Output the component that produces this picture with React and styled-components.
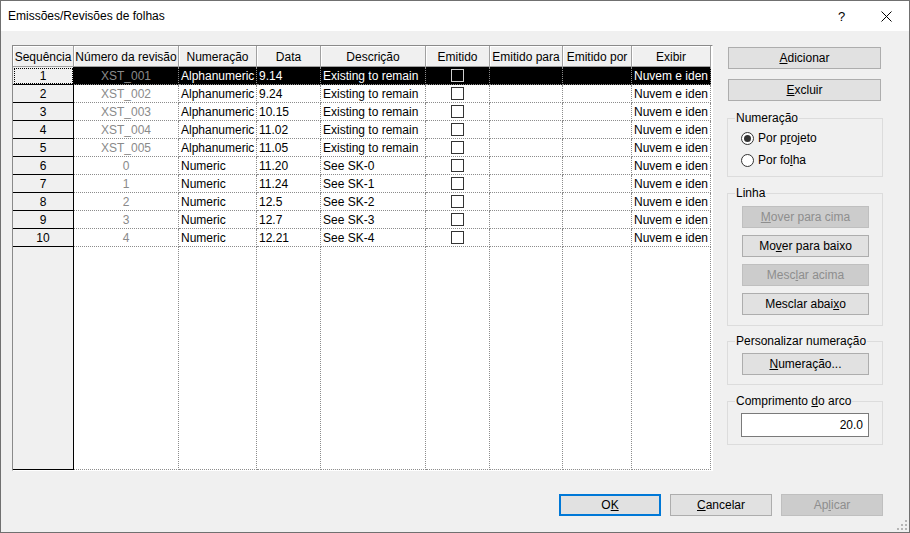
import React from 'react';
import styled, { createGlobalStyle, css } from 'styled-components';

const Global = createGlobalStyle`
  html, body { margin: 0; padding: 0; background: #fff; }
  body { font-family: "Liberation Sans", Arial, sans-serif; font-size: 12px; color: #000; }
  * { box-sizing: border-box; }
`;

const Window = styled.div`
  position: relative;
  width: 910px;
  height: 533px;
  border: 1px solid #707070;
  display: flex;
  flex-direction: column;
  background: #f0f0f0;
  overflow: hidden;
`;

const TitleBar = styled.div`
  height: 30px;
  background: #fff;
  display: flex;
  align-items: center;
  padding-left: 7px;
  flex-shrink: 0;
`;

const Title = styled.div`
  flex: 1;
  font-size: 12px;
`;

const TitleButton = styled.div`
  width: 45px;
  height: 30px;
  display: flex;
  align-items: center;
  justify-content: center;
  font-size: 13px;
`;

const Body = styled.div`
  flex: 1;
  display: flex;
  flex-direction: column;
  padding: 14px 0 0 11px;
`;

const Main = styled.div`
  display: flex;
  gap: 14px;
`;

const TableFrame = styled.div`
  width: 701px;
  height: 426px;
  border: 1px solid;
  border-color: #8a8a8a #fff #fff #8a8a8a;
  background: #fff;
`;

const Grid = styled.div`
  display: grid;
  grid-template-columns: 61px 105px 78px 64px 105px 64px 73px 69px 79px;
  grid-template-rows: 21px repeat(10, 18px) 1fr;
  height: 100%;
`;

const HeaderCell = styled.div`
  background: #f0f0f0;
  border-right: 1px solid #a0a0a0;
  border-bottom: 1px solid #a0a0a0;
  box-shadow: inset 1px 1px 0 #fff;
  display: flex;
  align-items: center;
  justify-content: center;
  white-space: nowrap;
  overflow: hidden;
  padding-top: 1px;
`;

const SeqCell = styled.div`
  background: #f0f0f0;
  border-right: 1px solid #000;
  border-bottom: 1px solid #000;
  display: flex;
  align-items: center;
  justify-content: center;
  ${(p) => p.$focus && css`
    outline: 1px dotted #000;
    outline-offset: -2px;
  `}
`;

const DataCell = styled.div`
  background: ${(p) => (p.$selected ? '#000' : '#fff')};
  color: ${(p) => (p.$selected ? '#fff' : '#000')};
  border-right: 1px dotted #8c8c8c;
  border-bottom: 1px dotted #8c8c8c;
  padding: 0 2px;
  display: flex;
  align-items: center;
  justify-content: ${(p) => (p.$center ? 'center' : 'flex-start')};
  white-space: nowrap;
  overflow: hidden;
  ${(p) => p.$muted && css`color: #8a8a8a;`}
`;

const Check = styled.span`
  width: 13px;
  height: 13px;
  border: 1px solid ${(p) => (p.$selected ? '#cfcfcf' : '#333')};
  background: ${(p) => (p.$selected ? '#000' : '#fff')};
`;

const Side = styled.div`
  width: 156px;
  display: flex;
  flex-direction: column;
  padding-top: 2px;
`;

const Button = styled.button`
  font-family: inherit;
  font-size: 12px;
  height: 22px;
  width: ${(p) => p.$w || 153}px;
  margin: 0;
  padding: 0;
  background: ${(p) => (p.disabled ? '#cccccc' : '#e1e1e1')};
  border: 1px solid ${(p) => (p.disabled ? '#bfbfbf' : '#adadad')};
  color: ${(p) => (p.disabled ? '#8e8e8e' : '#000')};
  ${(p) => p.$default && css`border: 2px solid #0078d7;`}
`;

const SideButton = styled(Button)`
  margin-left: 1px;
  margin-bottom: 10px;
`;

const Group = styled.fieldset`
  margin: ${(p) => p.$mt || 0}px 0 0 0;
  padding: 0;
  border: 1px solid #dcdcdc;
  width: 156px;
`;

const Legend = styled.legend`
  margin-left: 7px;
  padding: 0 1px;
  line-height: 14px;
  font-size: 12px;
`;

const GroupBody = styled.div`
  display: flex;
  flex-direction: column;
  gap: ${(p) => p.$gap || 0}px;
  padding: ${(p) => p.$pad};
`;

const RadioRow = styled.div`
  height: 18px;
  display: flex;
  align-items: center;
  gap: 4px;
`;

const RadioCircle = styled.span`
  width: 13px;
  height: 13px;
  border-radius: 50%;
  border: 1px solid #333;
  background: #fff;
  display: flex;
  align-items: center;
  justify-content: center;
  &::after {
    content: '';
    width: 7px;
    height: 7px;
    border-radius: 50%;
    background: ${(p) => (p.$checked ? '#333' : 'transparent')};
  }
`;

const RadioLabel = styled.span`
  white-space: nowrap;
`;

const Input = styled.div`
  width: 128px;
  height: 24px;
  border: 1px solid #7a7a7a;
  background: #fff;
  display: flex;
  align-items: center;
  justify-content: flex-end;
  padding-right: 5px;
`;

const Footer = styled.div`
  display: flex;
  justify-content: flex-end;
  gap: 9px;
  margin-top: 23px;
  padding-right: 26px;
`;

const U = styled.span`
  text-decoration: underline;
`;

const Grip = styled.svg`
  position: absolute;
  right: 2px;
  bottom: 2px;
`;

const rows = [
  ['1', 'XST_001', 'Alphanumeric', '9.14', 'Existing to remain'],
  ['2', 'XST_002', 'Alphanumeric', '9.24', 'Existing to remain'],
  ['3', 'XST_003', 'Alphanumeric', '10.15', 'Existing to remain'],
  ['4', 'XST_004', 'Alphanumeric', '11.02', 'Existing to remain'],
  ['5', 'XST_005', 'Alphanumeric', '11.05', 'Existing to remain'],
  ['6', '0', 'Numeric', '11.20', 'See SK-0'],
  ['7', '1', 'Numeric', '11.24', 'See SK-1'],
  ['8', '2', 'Numeric', '12.5', 'See SK-2'],
  ['9', '3', 'Numeric', '12.7', 'See SK-3'],
  ['10', '4', 'Numeric', '12.21', 'See SK-4'],
];

const headers = ['Sequência', 'Número da revisão', 'Numeração', 'Data', 'Descrição', 'Emitido', 'Emitido para', 'Emitido por', 'Exibir'];

export default function App() {
  return (
    <>
      <Global />
      <Window>
        <TitleBar>
          <Title>Emissões/Revisões de folhas</Title>
          <TitleButton>?</TitleButton>
          <TitleButton>
            <svg width="11" height="11" viewBox="0 0 11 11">
              <path d="M0.5 0.5 L10.5 10.5 M10.5 0.5 L0.5 10.5" stroke="#000" strokeWidth="1" />
            </svg>
          </TitleButton>
        </TitleBar>
        <Body>
          <Main>
            <TableFrame>
              <Grid>
                {headers.map((h) => (
                  <HeaderCell key={h}>{h}</HeaderCell>
                ))}
                {rows.map((r, i) => {
                  const sel = i === 0;
                  return (
                    <React.Fragment key={r[0]}>
                      <SeqCell $focus={sel}>{r[0]}</SeqCell>
                      <DataCell $selected={sel} $center $muted>{r[1]}</DataCell>
                      <DataCell $selected={sel}>{r[2]}</DataCell>
                      <DataCell $selected={sel}>{r[3]}</DataCell>
                      <DataCell $selected={sel}>{r[4]}</DataCell>
                      <DataCell $selected={sel} $center><Check $selected={sel} /></DataCell>
                      <DataCell $selected={sel} />
                      <DataCell $selected={sel} />
                      <DataCell $selected={sel}>Nuvem e iden</DataCell>
                    </React.Fragment>
                  );
                })}
                <SeqCell />
                {Array.from({ length: 8 }).map((_, i) => (
                  <DataCell key={i} />
                ))}
              </Grid>
            </TableFrame>
            <Side>
              <SideButton><U>A</U>dicionar</SideButton>
              <SideButton><U>E</U>xcluir</SideButton>
              <Group>
                <Legend>Numeração</Legend>
                <GroupBody $pad="4px 0 7px 13px" $gap={4}>
                  <RadioRow><RadioCircle $checked /><RadioLabel>Por p<U>r</U>ojeto</RadioLabel></RadioRow>
                  <RadioRow><RadioCircle /><RadioLabel>Por fo<U>l</U>ha</RadioLabel></RadioRow>
                </GroupBody>
              </Group>
              <Group $mt={9}>
                <Legend>Linha</Legend>
                <GroupBody $pad="6px 0 10px 14px" $gap={7}>
                  <Button $w={127} disabled><U>M</U>over para cima</Button>
                  <Button $w={127}>Mo<U>v</U>er para baixo</Button>
                  <Button $w={127} disabled>Mesc<U>l</U>ar acima</Button>
                  <Button $w={127}>Mesclar abai<U>x</U>o</Button>
                </GroupBody>
              </Group>
              <Group $mt={8}>
                <Legend>Personalizar numeração</Legend>
                <GroupBody $pad="5px 0 9px 14px">
                  <Button $w={127}><U>N</U>umeração...</Button>
                </GroupBody>
              </Group>
              <Group $mt={9}>
                <Legend>Comprimento <U>d</U>o arco</Legend>
                <GroupBody $pad="5px 0 7px 13px">
                  <Input>20.0</Input>
                </GroupBody>
              </Group>
            </Side>
          </Main>
          <Footer>
            <Button $w={102} $default>O<U>K</U></Button>
            <Button $w={102}><U>C</U>ancelar</Button>
            <Button $w={102} disabled>Ap<U>l</U>icar</Button>
          </Footer>
        </Body>
        <Grip width="10" height="10" viewBox="0 0 10 10">
          {[[8, 0], [8, 4], [4, 4], [8, 8], [4, 8], [0, 8]].map(([x, y]) => (
            <rect key={`${x}-${y}`} x={x} y={y} width="2" height="2" fill="#b5b5b5" />
          ))}
        </Grip>
      </Window>
    </>
  );
}
